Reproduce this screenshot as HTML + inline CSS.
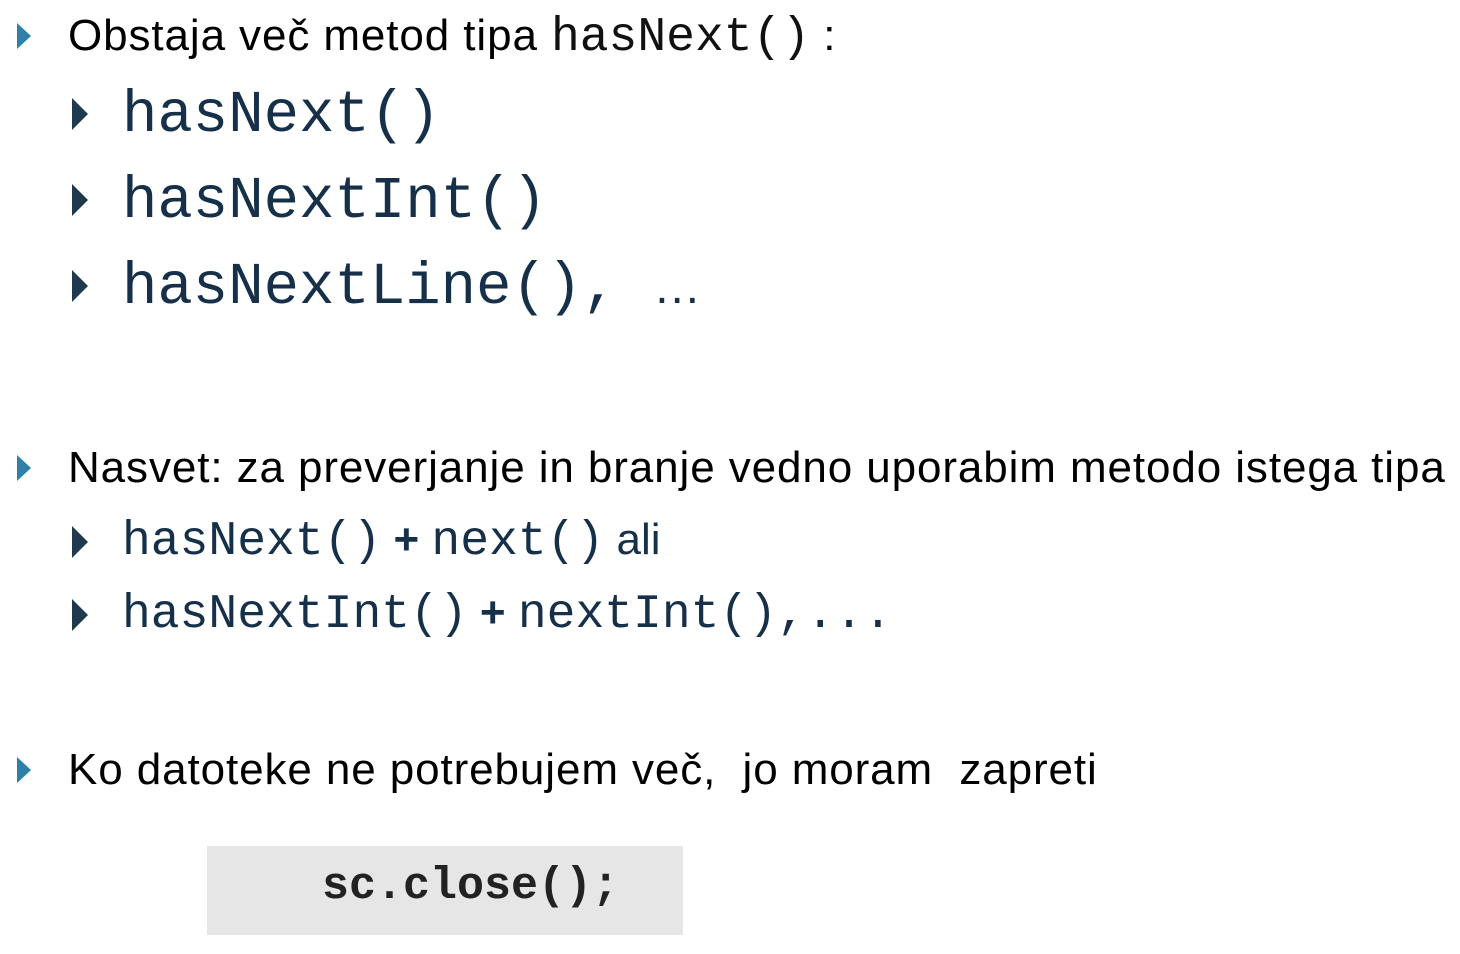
<!DOCTYPE html>
<html><head><meta charset="utf-8"><style>
body{margin:0;width:1460px;height:954px;background:#fff;position:relative;overflow:hidden;font-family:"Liberation Sans",sans-serif;color:#000}
.l{position:absolute;white-space:nowrap;line-height:1}
.m{font-family:"Liberation Mono",monospace;color:#17304a;letter-spacing:0}
.t1{position:absolute;width:0;height:0;border-top:13px solid transparent;border-bottom:13px solid transparent;border-left:14px solid #2e80a8}
.t2{position:absolute;width:0;height:0;border-top:16px solid transparent;border-bottom:16px solid transparent;border-left:16px solid #1e3a4c}
.s{font-size:44px;letter-spacing:0.9px}
</style></head><body>
<div class="t1" style="left:17px;top:23px"></div>
<div class="l s" style="left:68px;top:14px">Obstaja več metod tipa <span class="m" style="font-size:48px;color:#111">hasNext()</span> :</div>
<div class="t2" style="left:72px;top:98px"></div>
<div class="l m" style="left:122px;top:86px;font-size:59px">hasNext()</div>
<div class="t2" style="left:72px;top:184px"></div>
<div class="l m" style="left:122px;top:172px;font-size:59px">hasNextInt()</div>
<div class="t2" style="left:72px;top:270px"></div>
<div class="l m" style="left:122px;top:258px;font-size:59px">hasNextLine(), <span style="font-family:'Liberation Sans';font-size:48px">…</span></div>
<div class="t1" style="left:17px;top:455px"></div>
<div class="l s" style="left:68px;top:446px">Nasvet: za preverjanje in branje vedno uporabim metodo istega tipa</div>
<div class="t2" style="left:72px;top:526px"></div>
<div class="l" style="left:122px;top:518px;font-size:44px;color:#17304a"><span class="m" style="font-size:48px">hasNext()</span> <b>+</b> <span class="m" style="font-size:48px">next()</span> ali</div>
<div class="t2" style="left:72px;top:599px"></div>
<div class="l" style="left:122px;top:591px;font-size:44px;color:#17304a"><span class="m" style="font-size:48px">hasNextInt()</span> <b>+</b> <span class="m" style="font-size:48px">nextInt(),...</span></div>
<div class="t1" style="left:17px;top:757px"></div>
<div class="l s" style="left:68px;top:748px">Ko datoteke ne potrebujem več,&nbsp; jo moram &nbsp;zapreti</div>
<div style="position:absolute;left:207px;top:846px;width:476px;height:89px;background:#e6e6e6"></div>
<div class="l" style="left:322px;top:864px;font-family:'Liberation Mono',monospace;font-size:45px;font-weight:bold;color:#222">sc.close();</div>
</body></html>
